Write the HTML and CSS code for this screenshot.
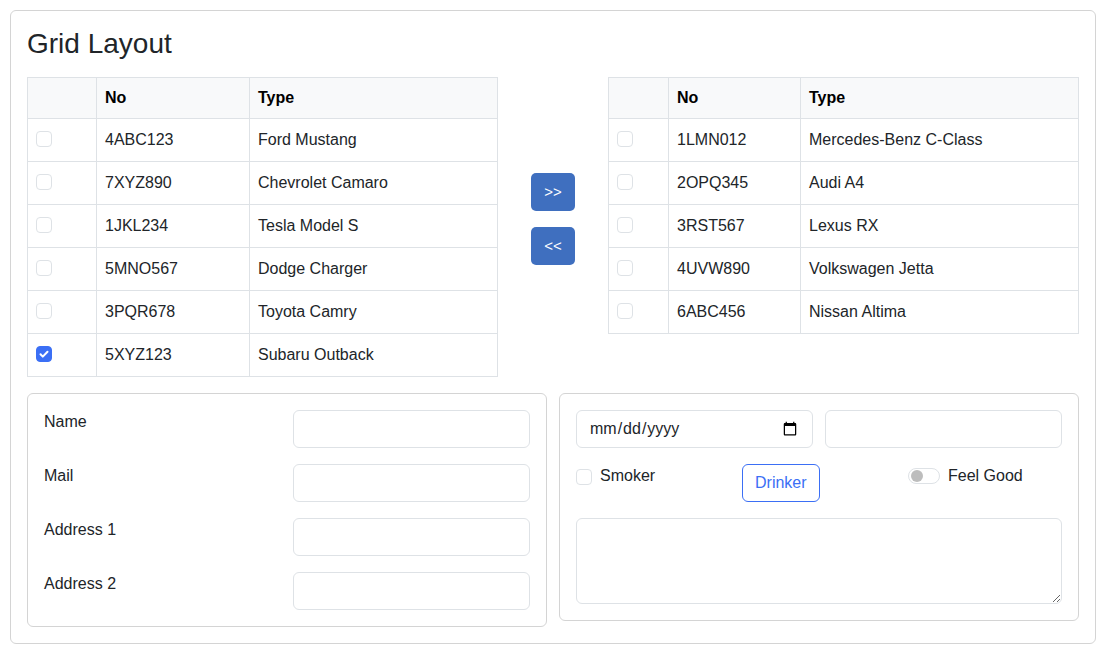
FILE: index.html
```html
<!DOCTYPE html>
<html lang="en">
<head>
<meta charset="utf-8">
<title>Grid Layout</title>
<link rel="stylesheet" href="styles.css">
</head>
<body>
<div class="card">
  <h3 class="title">Grid Layout</h3>
  <div class="top-row">
    <table class="grid grid-left">
      <colgroup><col class="c-chk-l"><col class="c-no-l"><col></colgroup>
      <thead><tr><th></th><th>No</th><th>Type</th></tr></thead>
      <tbody>
        <tr><td class="cell-chk"><span class="chk"></span></td><td>4ABC123</td><td>Ford Mustang</td></tr>
        <tr><td class="cell-chk"><span class="chk"></span></td><td>7XYZ890</td><td>Chevrolet Camaro</td></tr>
        <tr><td class="cell-chk"><span class="chk"></span></td><td>1JKL234</td><td>Tesla Model S</td></tr>
        <tr><td class="cell-chk"><span class="chk"></span></td><td>5MNO567</td><td>Dodge Charger</td></tr>
        <tr><td class="cell-chk"><span class="chk"></span></td><td>3PQR678</td><td>Toyota Camry</td></tr>
        <tr><td class="cell-chk"><span class="chk checked"><svg viewBox="0 0 16 16" width="16" height="16"><path d="M4.5 8.3l2.3 2.3 4.7-4.9" fill="none" stroke="#fff" stroke-width="2" stroke-linecap="round" stroke-linejoin="round"/></svg></span></td><td>5XYZ123</td><td>Subaru Outback</td></tr>
      </tbody>
    </table>
    <div class="mover">
      <button class="move-btn">&gt;&gt;</button>
      <button class="move-btn">&lt;&lt;</button>
    </div>
    <table class="grid grid-right">
      <colgroup><col class="c-chk-r"><col class="c-no-r"><col></colgroup>
      <thead><tr><th></th><th>No</th><th>Type</th></tr></thead>
      <tbody>
        <tr><td class="cell-chk"><span class="chk"></span></td><td>1LMN012</td><td>Mercedes-Benz C-Class</td></tr>
        <tr><td class="cell-chk"><span class="chk"></span></td><td>2OPQ345</td><td>Audi A4</td></tr>
        <tr><td class="cell-chk"><span class="chk"></span></td><td>3RST567</td><td>Lexus RX</td></tr>
        <tr><td class="cell-chk"><span class="chk"></span></td><td>4UVW890</td><td>Volkswagen Jetta</td></tr>
        <tr><td class="cell-chk"><span class="chk"></span></td><td>6ABC456</td><td>Nissan Altima</td></tr>
      </tbody>
    </table>
  </div>
  <div class="bottom-row">
    <div class="panel form-grid">
      <label class="lbl">Name</label><input class="field" type="text">
      <label class="lbl">Mail</label><input class="field" type="text">
      <label class="lbl">Address 1</label><input class="field" type="text">
      <label class="lbl">Address 2</label><input class="field" type="text">
    </div>
    <div class="panel right-panel">
      <div class="two-col">
        <input class="field" type="date">
        <input class="field" type="text">
      </div>
      <div class="three-col">
        <label class="check-line"><span class="chk"></span><span>Smoker</span></label>
        <div><button class="outline-btn">Drinker</button></div>
        <label class="check-line switch-line"><span class="switch"><span class="knob"></span></span><span>Feel Good</span></label>
      </div>
      <textarea class="field area" rows="3"></textarea>
    </div>
  </div>
</div>
</body>
</html>
```
FILE: styles.css
```css
* { box-sizing: border-box; }
html, body { margin: 0; padding: 0; background: #fff; }
body {
  padding: 10px;
  font-family: "Liberation Sans", Arial, sans-serif;
  font-size: 16px;
  line-height: 24px;
  color: #212529;
}
.card {
  width: 1086px;
  border: 1px solid #d4d4d4;
  border-radius: 6px;
  padding: 16px;
}
.title {
  margin: 0 0 16px 0;
  font-size: 28px;
  font-weight: 400;
  line-height: 1.2;
}
.top-row {
  display: grid;
  grid-template-columns: 471px 1fr 471px;
  align-items: start;
}
.grid {
  border-collapse: collapse;
  table-layout: fixed;
  width: 471px;
}
.c-chk-l { width: 69px; }
.c-no-l { width: 153px; }
.c-chk-r { width: 60px; }
.c-no-r { width: 132px; }
.grid th, .grid td {
  border: 1px solid #dee2e6;
  padding: 8px;
  text-align: left;
  vertical-align: middle;
}
.grid th {
  background: #f8f9fa;
  font-weight: 700;
  color: #000;
  height: 41px;
}
.grid td { height: 43px; }
.grid td.cell-chk { vertical-align: top; }
.chk {
  display: inline-block;
  width: 16px;
  height: 16px;
  margin-top: 4px;
  border: 1px solid #dee2e6;
  border-radius: 4px;
  background: #fff;
  vertical-align: top;
}
.chk.checked {
  background: #3b6ff5;
  border-color: #3b6ff5;
  position: relative;
}
.chk.checked svg {
  position: absolute;
  left: -1px;
  top: -1px;
}
.mover {
  display: flex;
  flex-direction: column;
  align-items: center;
  gap: 16px;
  padding-top: 96px;
}
.move-btn {
  width: 44px;
  height: 38px;
  border: 0;
  border-radius: 5px;
  background: #3f6fbf;
  color: #fff;
  font-family: "Liberation Sans", Arial, sans-serif;
  font-size: 15px;
  padding: 0;
}
.bottom-row {
  display: grid;
  grid-template-columns: 1fr 1fr;
  gap: 12px;
  margin-top: 16px;
  align-items: start;
}
.panel {
  border: 1px solid #d4d4d4;
  border-radius: 6px;
  padding: 16px;
}
.form-grid {
  display: grid;
  grid-template-columns: 1fr 1fr;
  column-gap: 12px;
  row-gap: 16px;
}
.lbl { display: block; }
.field {
  display: block;
  width: 100%;
  height: 38px;
  border: 1px solid #dee2e6;
  border-radius: 6px;
  padding: 6px 12px;
  font-family: "Liberation Sans", Arial, sans-serif;
  font-size: 16px;
  line-height: 24px;
  color: #212529;
  background: #fff;
}
.right-panel {
  display: flex;
  flex-direction: column;
  gap: 16px;
}
.two-col {
  display: grid;
  grid-template-columns: 1fr 1fr;
  gap: 12px;
}
.three-col {
  display: grid;
  grid-template-columns: 1fr 1fr 1fr;
  gap: 12px;
  align-items: start;
}
.check-line {
  display: flex;
  align-items: flex-start;
  gap: 8px;
}
.check-line .chk { margin-top: 5px; }
.outline-btn {
  height: 38px;
  border: 1px solid #3b6ff5;
  border-radius: 6px;
  background: #fff;
  color: #3b6ff5;
  padding: 6px 12px;
  font-family: "Liberation Sans", Arial, sans-serif;
  font-size: 16px;
  line-height: 24px;
}
.switch {
  display: inline-block;
  position: relative;
  width: 32px;
  height: 16px;
  margin-top: 4px;
  border: 1px solid #dee2e6;
  border-radius: 8px;
  background: #fff;
}
.knob {
  position: absolute;
  left: 2px;
  top: 1px;
  width: 12px;
  height: 12px;
  border-radius: 50%;
  background: #bdbdbd;
}
.area {
  height: 86px;
  resize: vertical;
}
```
